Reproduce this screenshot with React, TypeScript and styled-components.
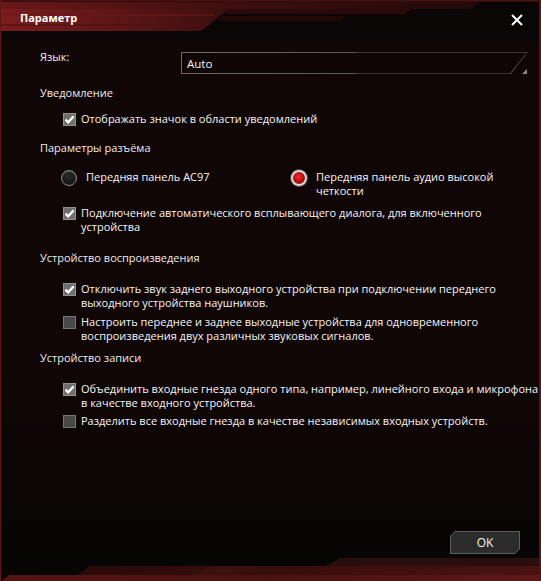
import React from "react";
import styled, { createGlobalStyle } from "styled-components";

const Global = createGlobalStyle`
  html, body { margin: 0; padding: 0; background: #0a0505; }
  body { font-family: "Open Sans", "Noto Sans", sans-serif; }
  * { box-sizing: border-box; }
`;

const Window = styled.div`
  position: relative;
  width: 541px;
  height: 581px;
  display: flex;
  flex-direction: column;
  background: linear-gradient(to bottom, #110606 0%, #110606 62%, #070404 100%);
  border-left: 1px solid #641616;
  border-right: 2px solid #5a1212;
  overflow: hidden;
  color: #f2f2f2;
  font-size: 11px;
`;

const Header = styled.header`
  position: relative;
  flex: none;
  height: 40px;
  display: flex;
  align-items: flex-start;
  justify-content: space-between;
  padding: 0 16px 0 19px;
`;

const Art = styled.svg`
  position: absolute;
  left: 0;
  top: 0;
  z-index: 0;
  display: block;
`;

const Title = styled.h1`
  position: relative;
  z-index: 1;
  margin: 11px 0 0;
  font: 700 11px/14px "Open Sans", "Noto Sans", sans-serif;
  color: #ffffff;
`;

const CloseButton = styled.button`
  position: relative;
  z-index: 1;
  margin-top: 14px;
  padding: 0;
  width: 12px;
  height: 12px;
  border: none;
  background: none;
  display: block;
`;

const Content = styled.main`
  flex: 1;
  display: flex;
  flex-direction: column;
  padding: 10px 0 0 39px;
`;

const LangRow = styled.div`
  display: flex;
  align-items: flex-start;
`;

const FieldLabel = styled.span`
  width: 141px;
  line-height: 14px;
`;

const SelectOuter = styled.div`
  position: relative;
  margin-top: 2px;
  width: 347px;
  height: 22px;
  padding: 1px;
  background: linear-gradient(to right, #6a6a6a 0%, #5a5a5a 50%, #3a3838 51%, #3a3838 100%);
  clip-path: polygon(0 0, 100% 0, calc(100% - 17px) 100%, 0 100%);
`;

const SelectInner = styled.div`
  height: 100%;
  background: #0f0505;
  clip-path: polygon(0 0, calc(100% - 1px) 0, calc(100% - 17px) 100%, 0 100%);
  display: flex;
  align-items: center;
  padding-left: 5px;
  font-size: 11.5px;
  color: #f4f4f4;
`;

const SelectWrap = styled.div`
  position: relative;
  &::after {
    content: "";
    position: absolute;
    right: 1px;
    bottom: 0;
    width: 5px;
    height: 5px;
    background: #8a8a8a;
    clip-path: polygon(100% 0, 100% 100%, 0 100%);
  }
`;

const Heading = styled.div<{ $mt: number }>`
  margin-top: ${(p) => p.$mt}px;
  line-height: 14px;
  color: #ececec;
`;

const Option = styled.label<{ $mt: number }>`
  display: flex;
  align-items: flex-start;
  margin: ${(p) => p.$mt}px 0 0 23px;
  line-height: 14px;
  white-space: nowrap;
  color: #f4f4f4;
`;

const Box = styled.span<{ $on: boolean }>`
  flex: none;
  width: 13px;
  height: 13px;
  margin: 1px 5px 0 0;
  border: 1px solid ${(p) => (p.$on ? "#929292" : "#767676")};
  background: ${(p) => (p.$on ? "#6e6e6e" : "#484848")};
  display: flex;
  align-items: center;
  justify-content: center;
`;

const RadioGroup = styled.div<{ $mt: number }>`
  margin: ${(p) => p.$mt}px 0 0 21px;
  display: grid;
  grid-template-columns: 230px auto;
`;

const RadioItem = styled.label`
  display: flex;
  align-items: flex-start;
  line-height: 14px;
  white-space: nowrap;
  color: #f4f4f4;
`;

const Dot = styled.span<{ $on: boolean }>`
  flex: none;
  width: 16px;
  height: 16px;
  margin-right: 9px;
  border-radius: 50%;
  border: ${(p) => (p.$on ? "2px solid #dcdcdc" : "1px solid #8a8a8a")};
  background: ${(p) =>
    p.$on
      ? "radial-gradient(circle at 45% 40%, #f03030 0%, #c01010 45%, #7a0000 100%)"
      : "radial-gradient(circle at 45% 40%, #2a2a2a 0%, #141414 70%, #0a0a0a 100%)"};
  box-shadow: ${(p) => (p.$on ? "0 0 0 1px #555" : "inset 0 1px 1px #555")};
`;

const ButtonRow = styled.div`
  flex: none;
  height: 23px;
  display: flex;
  justify-content: flex-end;
  padding-right: 19px;
`;

const OkOuter = styled.button`
  width: 70px;
  height: 23px;
  padding: 1px;
  border: none;
  background: #5e5e5e;
  clip-path: polygon(5px 0, 100% 0, 100% calc(100% - 5px), calc(100% - 5px) 100%, 0 100%, 0 5px);
`;

const OkInner = styled.span`
  display: flex;
  align-items: center;
  justify-content: center;
  width: 100%;
  height: 100%;
  background: #2c2c2c;
  clip-path: polygon(4px 0, 100% 0, 100% calc(100% - 4px), calc(100% - 4px) 100%, 0 100%, 0 4px);
  color: #f4f4f4;
  font: 400 12px/1 "Open Sans", "Noto Sans", sans-serif;
`;

const Bottom = styled.div`
  position: relative;
  flex: none;
  height: 27px;
`;

const Check = () => (
  <svg width="11" height="11" viewBox="0 0 11 11">
    <path d="M1.5 5.6 L4.2 8.3 L9.6 2.4" fill="none" stroke="#ffffff" strokeWidth="2.3" />
  </svg>
);

const CheckItem = ({ on, mt, children }: { on: boolean; mt: number; children: React.ReactNode }) => (
  <Option $mt={mt}>
    <Box $on={on}>{on && <Check />}</Box>
    <span>{children}</span>
  </Option>
);

export default function App() {
  return (
    <>
      <Global />
      <Window>
        <Header>
          <Art width="538" height="40" viewBox="0 0 538 40">
            <defs>
              <linearGradient id="hb1" x1="0" x2="1" y1="0" y2="0">
                <stop offset="0" stopColor="#6a1818" />
                <stop offset="0.5" stopColor="#3c0e0e" />
                <stop offset="1" stopColor="#220909" />
              </linearGradient>
              <linearGradient id="hb2" x1="0" x2="1" y1="0" y2="0">
                <stop offset="0" stopColor="#7a1d1d" />
                <stop offset="0.55" stopColor="#5a1515" />
                <stop offset="1" stopColor="#3a0e0e" />
              </linearGradient>
            </defs>
            <rect x="0" y="0" width="538" height="40" fill="#0b0606" />
            <rect x="0" y="0" width="538" height="1.5" fill="#4e1010" />
            <polygon points="0,2 478,2 470,9 0,9" fill="url(#hb1)" />
            <polygon points="0,9 228,9 200,31 0,31" fill="url(#hb2)" />
            <polygon points="0,14 214,14 212,16 0,16" fill="#6a1818" opacity="0.6" />
            <polygon points="0,24 205,24 204,26 0,26" fill="#4c1212" opacity="0.6" />
            <polygon points="228,9 410,9 404,14 223,14" fill="#2c0a0a" />
            <polygon points="221,16 345,16 339,21 215,21" fill="#200808" />
          </Art>
          <Title>Параметр</Title>
          <CloseButton aria-label="close">
            <svg width="12" height="12" viewBox="0 0 12 12">
              <path d="M1 1 L11 11 M11 1 L1 11" stroke="#ffffff" strokeWidth="2" />
            </svg>
          </CloseButton>
        </Header>

        <Content>
          <LangRow>
            <FieldLabel>Язык:</FieldLabel>
            <SelectWrap>
              <SelectOuter>
                <SelectInner>Auto</SelectInner>
              </SelectOuter>
            </SelectWrap>
          </LangRow>

          <Heading $mt={12}>Уведомление</Heading>
          <CheckItem on mt={12}>Отображать значок в области уведомлений</CheckItem>

          <Heading $mt={15}>Параметры разъёма</Heading>
          <RadioGroup $mt={15}>
            <RadioItem>
              <Dot $on={false} />
              <span>Передняя панель AC97</span>
            </RadioItem>
            <RadioItem>
              <Dot $on />
              <span>
                Передняя панель аудио высокой
                <br />
                четкости
              </span>
            </RadioItem>
          </RadioGroup>
          <CheckItem on mt={8}>
            Подключение автоматического всплывающего диалога, для включенного
            <br />
            устройства
          </CheckItem>

          <Heading $mt={17}>Устройство воспроизведения</Heading>
          <CheckItem on mt={17}>
            Отключить звук заднего выходного устройства при подключении переднего
            <br />
            выходного устройства наушников.
          </CheckItem>
          <CheckItem on={false} mt={5}>
            Настроить переднее и заднее выходные устройства для одновременного
            <br />
            воспроизведения двух различных звуковых сигналов.
          </CheckItem>

          <Heading $mt={8}>Устройство записи</Heading>
          <CheckItem on mt={17}>
            Объединить входные гнезда одного типа, например, линейного входа и микрофона
            <br />
            в качестве входного устройства.
          </CheckItem>
          <CheckItem on={false} mt={4}>
            Разделить все входные гнезда в качестве независимых входных устройств.
          </CheckItem>
        </Content>

        <ButtonRow>
          <OkOuter>
            <OkInner>OK</OkInner>
          </OkOuter>
        </ButtonRow>

        <Bottom>
          <Art width="538" height="27" viewBox="0 0 538 27">
            <defs>
              <linearGradient id="fb1" x1="0" x2="1" y1="0" y2="0">
                <stop offset="0" stopColor="#2a0909" />
                <stop offset="1" stopColor="#4a1212" />
              </linearGradient>
              <linearGradient id="fb2" x1="0" x2="1" y1="0" y2="0">
                <stop offset="0" stopColor="#561414" />
                <stop offset="0.5" stopColor="#4a1111" />
                <stop offset="1" stopColor="#5e1818" />
              </linearGradient>
            </defs>
            <rect x="0" y="0" width="538" height="27" fill="#070404" />
            <polygon points="339,4 538,4 538,27 297,27" fill="#2a0d0d" />
            <polygon points="88,12 538,12 538,27 70,27" fill="url(#fb1)" />
            <polygon points="210,12 260,12 235,21 190,21" fill="#3c1010" />
            <polygon points="8,21 538,21 538,27 0,27" fill="url(#fb2)" />
            <polygon points="0,21 8,21 0,27" fill="#070404" />
          </Art>
        </Bottom>
      </Window>
    </>
  );
}
